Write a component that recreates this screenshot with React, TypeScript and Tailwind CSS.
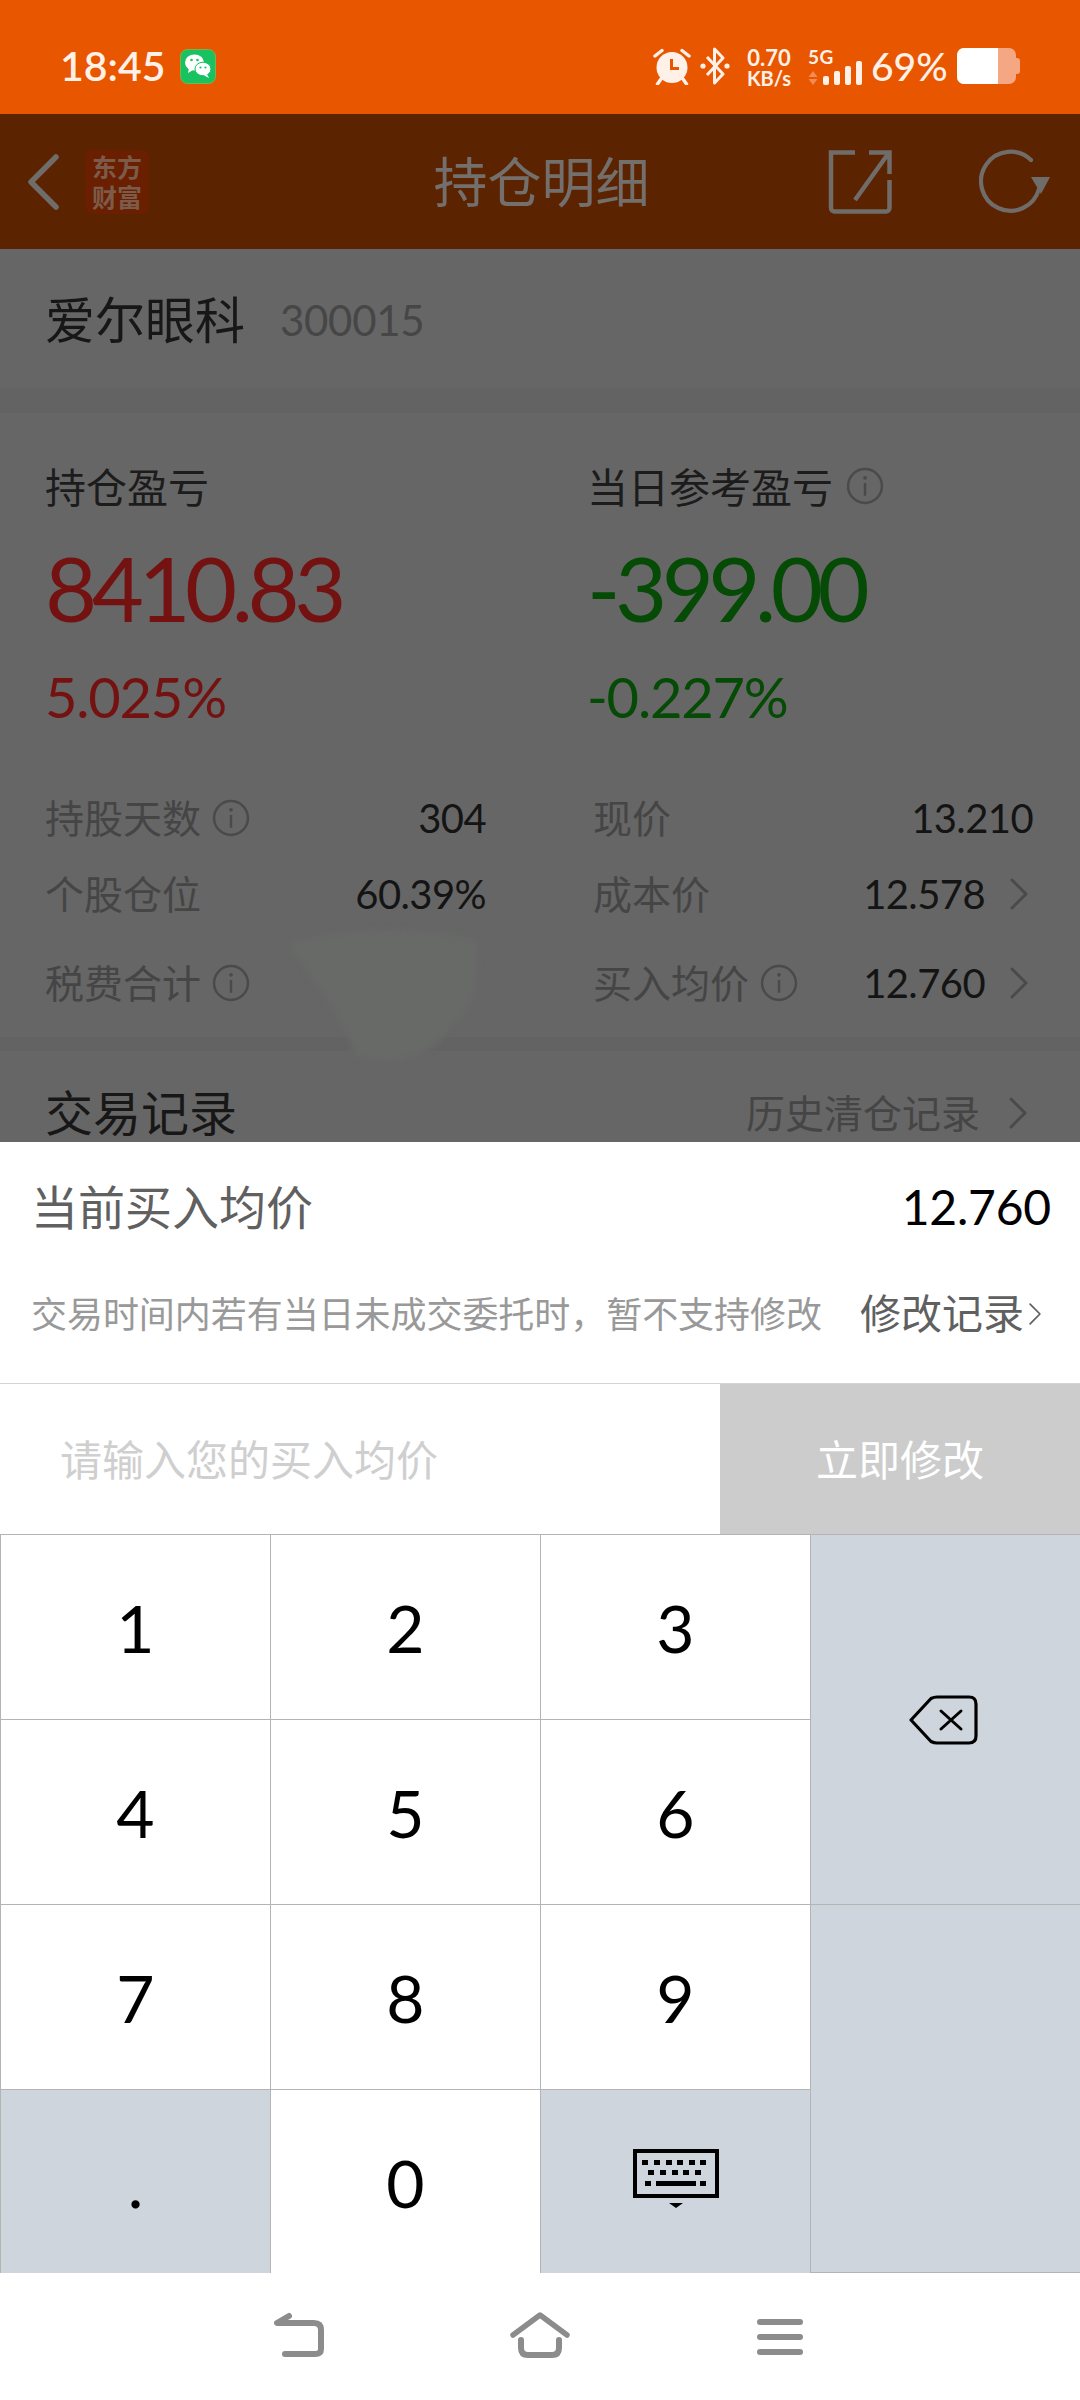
import React from "react";

const Info = ({ c = "#4a4a4a" }: { c?: string }) => (
  <svg width="38" height="38" viewBox="0 0 37 37" fill="none" className="shrink-0">
    <circle cx="18.5" cy="18.5" r="16.5" stroke={c} strokeWidth="2.4" />
    <circle cx="18.5" cy="10.5" r="1.8" fill={c} />
    <path d="M18.5 15.5V28" stroke={c} strokeWidth="2.4" />
  </svg>
);

const Chevron = ({ c = "#4a4a4a", w = 20, h = 32, sw = 3 }: { c?: string; w?: number; h?: number; sw?: number }) => (
  <svg width={w} height={h} viewBox="0 0 20 32" fill="none" className="shrink-0">
    <path d="M3 2L17 16L3 30" stroke={c} strokeWidth={sw} strokeLinecap="round" strokeLinejoin="round" />
  </svg>
);

const WeChat = () => (
  <svg width="36" height="35" viewBox="0 0 36 35" className="shrink-0">
    <rect x="0.5" y="0.5" width="35" height="34" rx="7" fill="#19c260" stroke="#7fb24a" />
    <ellipse cx="14.5" cy="13.5" rx="9.5" ry="8" fill="#fff" />
    <path d="M9 19l-1 5 5-3z" fill="#fff" />
    <ellipse cx="23" cy="20" rx="8" ry="6.8" fill="#fff" stroke="#19c260" strokeWidth="1" />
    <path d="M27 25l2 4-5-2.4z" fill="#fff" />
    <circle cx="11.5" cy="11" r="1.3" fill="#19c260" />
    <circle cx="17.5" cy="11" r="1.3" fill="#19c260" />
    <circle cx="20.5" cy="18.5" r="1.1" fill="#19c260" />
    <circle cx="25.5" cy="18.5" r="1.1" fill="#19c260" />
  </svg>
);

const Alarm = () => (
  <svg width="38" height="37" viewBox="0 0 38 37" fill="none" className="shrink-0">
    <circle cx="19" cy="19.5" r="15.5" fill="#fff1e8" />
    <path d="M18.5 11V20.5H26" stroke="#e95600" strokeWidth="3" />
    <path d="M2 8L9 2.5M36 8L29 2.5M8 31L4.5 36M30 31L33.5 36" stroke="#fff1e8" strokeWidth="3.4" strokeLinecap="round" />
  </svg>
);

const Bluetooth = () => (
  <svg width="30" height="40" viewBox="0 0 30 40" fill="none" className="shrink-0">
    <path d="M7 11L23 28L14.5 37V3L23 12L7 29" stroke="#fff1e8" strokeWidth="3" strokeLinejoin="round" />
    <circle cx="3" cy="20" r="2.6" fill="#fff1e8" />
    <circle cx="27" cy="20" r="2.6" fill="#fff1e8" />
  </svg>
);

const Signal = () => (
  <div className="flex h-[38px] w-[54px] flex-col">
    <span className="h-[19px] text-[19px] leading-[19px] font-bold tracking-[0.5px] text-[#fff1e8]">5G</span>
    <div className="mt-[-5px] flex h-[24px] items-end">
      <svg width="10" height="14" viewBox="0 0 10 14" className="mr-[5px] shrink-0">
        <path d="M5 0L9.5 6H.5zM5 14L.5 8H9.5z" fill="#f58a54" />
      </svg>
      <div className="flex items-end gap-[5px]">
        <div className="h-[9px] w-[6px] rounded-[2px] bg-[#fff1e8]" />
        <div className="h-[14px] w-[6px] rounded-[2px] bg-[#fff1e8]" />
        <div className="h-[19px] w-[6px] rounded-[2px] bg-[#fff1e8]" />
        <div className="h-[24px] w-[6px] rounded-[2px] bg-[#fff1e8]" />
      </div>
    </div>
  </div>
);

const Battery = () => (
  <div className="flex h-[36px] w-[63px] items-center">
    <div className="flex h-[36px] w-[59px] overflow-hidden rounded-[7px] bg-[#f5a784]">
      <div className="h-full w-[41px] bg-white" />
    </div>
    <div className="h-[16px] w-[4px] rounded-r-[3px] bg-[#f5a784]" />
  </div>
);

const StatusBar = () => (
  <div className="flex h-[114px] items-center bg-[#e95600] pt-[18px] pl-[60px] pr-[60px] text-[#fff1e8]">
    <span className="w-[120px] text-[41px] leading-[48px] font-semibold">18:45</span>
    <WeChat />
    <div className="ml-auto flex items-center">
      <Alarm />
      <div className="ml-[9px]"><Bluetooth /></div>
      <div className="ml-[14px] flex w-[50px] flex-col items-center text-[22px] leading-[23px] font-bold">
        <span>0.70</span>
        <span className="text-[20px] leading-[18px]">KB/s</span>
      </div>
      <div className="ml-[14px]"><Signal /></div>
      <span className="ml-[9px] w-[82px] text-[39px] leading-[44px] font-medium">69%</span>
      <div className="ml-[4px]"><Battery /></div>
    </div>
  </div>
);

const Header = () => (
  <div className="grid h-[135px] grid-cols-[1fr_auto_1fr] items-center bg-[#5c2300] pl-[26px] pr-[29px]">
    <div className="flex items-center">
      <svg width="34" height="56" viewBox="0 0 34 56" fill="none" className="shrink-0">
        <path d="M30 3L5 28L30 53" stroke="#6f6c6a" strokeWidth="5.5" strokeLinecap="round" strokeLinejoin="round" />
      </svg>
      <div className="ml-[25px] flex h-[64px] w-[64px] flex-col items-center justify-center rounded-[8px] bg-[#691f00] text-[25px] leading-[30px] font-bold text-[#7c5b4a]">
        <span>东方</span>
        <span>财富</span>
      </div>
    </div>
    <div className="mr-[-6px] pt-[2px] text-center text-[54px] leading-[60px] text-[#736f6c]">持仓明细</div>
    <div className="flex items-center justify-end">
      <svg width="64" height="64" viewBox="0 0 64 64" fill="none" className="shrink-0">
        <path d="M27 2.5H3V58a3.5 3.5 0 0 0 3.5 3.5H58a3.5 3.5 0 0 0 3.5-3.5V30" stroke="#6f6c6a" strokeWidth="4.5" />
        <path d="M41 2.5H61.5V24M60 4L27 50" stroke="#6f6c6a" strokeWidth="4.5" />
      </svg>
      <svg width="72" height="66" viewBox="0 0 72 66" fill="none" className="ml-[87px] shrink-0">
        <path d="M60 40A29.5 29.5 0 1 1 52 11" stroke="#6f6c6a" strokeWidth="4.2" strokeLinecap="round" />
        <path d="M52 28H71L62 45z" fill="#6f6c6a" />
      </svg>
    </div>
  </div>
);

type StatProps = { label: string; value?: string; info?: boolean; chevron?: boolean; className: string };
const Stat = ({ label, value, info, chevron, className }: StatProps) => (
  <div className={`flex h-[76px] items-center ${className}`}>
    <span className="text-[39px] leading-[50px] text-[#454545]">{label}</span>
    {info && <div className="ml-[11px]"><Info /></div>}
    {value && <span className="ml-auto text-[40px] leading-[50px] tracking-[-0.6px] text-[#141414]">{value}</span>}
    {chevron && <div className="ml-[24px] mr-[4px]"><Chevron /></div>}
  </div>
);

const Smudge = () => (
  <svg width="200" height="140" viewBox="0 0 200 140" className="absolute top-[676px] left-[285px] blur-[3px]">
    <path d="M5 20C40 5 130 0 190 15C196 60 185 90 165 100C150 135 100 140 70 130C60 90 30 60 5 20Z" fill="#686a68" />
  </svg>
);

const Position = () => (
  <div className="relative h-[893px] bg-[#636363]">
    <div className="flex h-[139px] items-center bg-[#666666] pl-[45px] pt-[3px]">
      <span className="text-[50px] leading-[60px] text-[#171717]">爱尔眼科</span>
      <span className="ml-[35px] text-[42px] leading-[60px] tracking-[-0.3px] text-[#464646]">300015</span>
    </div>
    <div className="mt-[25px] flex h-[624px] flex-col bg-[#666666] pt-[47px]">
      <div className="grid grid-cols-[542px_1fr] pl-[45px]">
        <div className="flex flex-col">
          <span className="text-[41px] leading-[56px] text-[#1c1c1c]">持仓盈亏</span>
          <span className="mt-[21px] text-[90px] leading-[100px] tracking-[-5.5px] text-[#741212]">8410.83</span>
          <span className="mt-[25px] text-[56px] leading-[70px] tracking-[-1.2px] text-[#741212]">5.025%</span>
        </div>
        <div className="flex flex-col">
          <div className="flex h-[56px] items-center">
            <span className="text-[41px] leading-[56px] text-[#1c1c1c]">当日参考盈亏</span>
            <div className="mt-[-4px] ml-[13px]"><Info /></div>
          </div>
          <span className="mt-[21px] text-[90px] leading-[100px] tracking-[-5.5px] text-[#054a05]">-399.00</span>
          <span className="mt-[25px] text-[56px] leading-[70px] tracking-[-1.2px] text-[#054a05]">-0.227%</span>
        </div>
      </div>
      <div className="mt-[48px] grid grid-cols-[441px_440px] gap-x-[107px] pl-[45px]">
        <Stat className="" label="持股天数" info value="304" />
        <Stat className="" label="现价" value="13.210" />
        <Stat className="" label="个股仓位" value="60.39%" />
        <Stat className="" label="成本价" value="12.578" chevron />
        <Stat className="mt-[13px]" label="税费合计" info />
        <Stat className="mt-[13px]" label="买入均价" info value="12.760" chevron />
      </div>
    </div>
    <div className="mt-[14px] flex h-[91px] items-start overflow-hidden bg-[#666666] px-[45px] pt-[32px]">
      <span className="text-[48px] leading-[60px] text-[#171717]">交易记录</span>
      <span className="ml-auto text-[39px] leading-[60px] text-[#454545]">历史清仓记录</span>
      <div className="mt-[14px] ml-[28px] mr-[7px]"><Chevron /></div>
    </div>
    <Smudge />
  </div>
);

const Sheet = () => (
  <div className="bg-white">
    <div className="h-[242px] border-b border-[#d4d4d4] pl-[31px] pr-[29px] pt-[35px]">
      <div className="flex items-center justify-between">
        <span className="text-[47px] leading-[60px] text-[#606060]">当前买入均价</span>
        <span className="text-[48px] leading-[60px] tracking-[-0.2px] text-black">12.760</span>
      </div>
      <div className="mt-[49px] flex h-[56px] items-center">
        <span className="text-[36px] leading-[56px] tracking-[-0.05px] text-[#999999]">交易时间内若有当日未成交委托时，暂不支持修改</span>
        <span className="ml-[38px] text-[41px] leading-[56px] text-[#606060]">修改记录</span>
        <div className="ml-[4px]"><Chevron c="#606060" w={14} h={24} sw={2.5} /></div>
      </div>
    </div>
    <div className="flex h-[150px]">
      <div className="flex flex-1 items-center pl-[60px] pt-[2px] text-[42px] leading-[56px] text-[#cfcfcf]">请输入您的买入均价</div>
      <div className="flex w-[360px] items-center justify-center bg-[#cccccc] pt-[2px] text-[42px] leading-[56px] text-white">立即修改</div>
    </div>
  </div>
);

const Key = ({ children, gray }: { children: React.ReactNode; gray?: boolean }) => (
  <div className={`flex items-center justify-center border-t border-l border-[#b4b4b4] pt-[2px] text-[66px] leading-none text-black ${gray ? "bg-[#ced5dc]" : "bg-white"}`}>
    {children}
  </div>
);

const KeyboardIcon = () => (
  <svg width="86" height="62" viewBox="0 0 86 62" className="mt-[-6px]">
    <rect x="2" y="2" width="82" height="45" fill="none" stroke="#000" strokeWidth="4" />
    <path d="M9 11h6v5H9zM21 11h6v5h-6zM33 11h6v5h-6zM44 11h6v5h-6zM56 11h6v5h-6zM67 11h6v5h-6zM15 21h6v5h-6zM27 21h6v5h-6zM39 21h6v5h-6zM50 21h6v5h-6zM62 21h6v5h-6zM12 32h6v5h-6zM23 32h40v5H23zM67 32h6v5h-6z" fill="#000" />
    <path d="M36 54h14l-7 5z" fill="#000" />
  </svg>
);

const Keypad = () => (
  <div className="grid h-[739px] grid-cols-4 grid-rows-[185px_185px_185px_184px]">
    <Key>1</Key>
    <Key>2</Key>
    <Key>3</Key>
    <div className="row-span-2 flex items-center justify-center border-t border-l border-[#b4b4b4] bg-[#ced5dc]">
      <svg width="70" height="52" viewBox="0 0 70 52" fill="none" className="ml-[-4px]">
        <path d="M2 26L22 4.5Q25 3 28 3H60Q67 3 67 10V42Q67 49 60 49H28Q25 49 22 47.5Z" stroke="#000" strokeWidth="3.2" strokeLinejoin="round" />
        <path d="M32 17L52 35M52 17L32 35" stroke="#000" strokeWidth="3" strokeLinecap="round" />
      </svg>
    </div>
    <Key>4</Key>
    <Key>5</Key>
    <Key>6</Key>
    <Key>7</Key>
    <Key>8</Key>
    <Key>9</Key>
    <div className="row-span-2 border-t border-l border-b border-[#b4b4b4] bg-[#ced5dc]" />
    <Key gray>.</Key>
    <Key>0</Key>
    <Key gray><KeyboardIcon /></Key>
  </div>
);

const NavBar = () => (
  <div className="flex h-[127px] items-start justify-center bg-white pt-[39px]">
    <svg width="50" height="46" viewBox="0 0 50 46" fill="none" className="ml-[-4px] shrink-0">
      <path d="M15 4L3 11H40Q47 11 47 18V37Q47 42 41 42H11" stroke="#8c8c8c" strokeWidth="6" strokeLinecap="round" strokeLinejoin="round" />
    </svg>
    <svg width="60" height="46" viewBox="0 0 60 46" fill="none" className="ml-[186px] shrink-0">
      <path d="M3 23L30 3L57 23" stroke="#8c8c8c" strokeWidth="5.5" strokeLinecap="round" strokeLinejoin="round" />
      <path d="M11 28V36Q11 43 18 43H42Q49 43 49 36V28" stroke="#8c8c8c" strokeWidth="6" strokeLinecap="round" />
    </svg>
    <div className="mt-[7px] ml-[187px] flex w-[46px] flex-col gap-[9px]">
      <div className="h-[6px] rounded-full bg-[#8c8c8c]" />
      <div className="h-[6px] rounded-full bg-[#8c8c8c]" />
      <div className="h-[6px] rounded-full bg-[#8c8c8c]" />
    </div>
  </div>
);

export default function App() {
  return (
    <div className="h-[2400px] w-[1080px] overflow-hidden bg-white font-['Lato','Noto_Sans_CJK_SC',sans-serif]">
      <StatusBar />
      <Header />
      <Position />
      <Sheet />
      <Keypad />
      <NavBar />
    </div>
  );
}
